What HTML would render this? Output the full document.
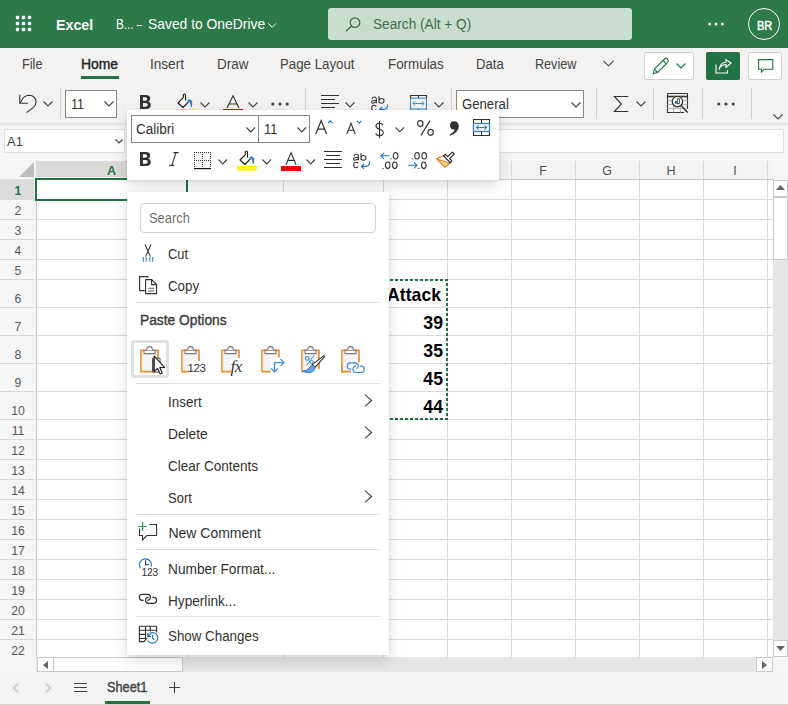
<!DOCTYPE html>
<html><head><meta charset="utf-8">
<style>
*{margin:0;padding:0;box-sizing:border-box}
html,body{width:788px;height:705px;overflow:hidden;background:#f5f5f5;font-family:"Liberation Sans",sans-serif;color:#323130}
.a{position:absolute}
.t{position:absolute;line-height:1;white-space:nowrap;transform-origin:0 0}
svg{position:absolute;overflow:visible}
.wh{color:#fff}
.tab{position:absolute;top:56.8px;font-size:14px;line-height:1;color:#424242;white-space:nowrap;transform-origin:0 0}
.sep{position:absolute;width:1px;background:#d2d0ce}
.box{position:absolute;background:#fff;border:1px solid #8a8886}
.hl{position:absolute;left:36px;width:737px;height:1px;background:#dadada}
.vl{position:absolute;top:161px;width:1px;height:496px;background:#dadada}
.rh{position:absolute;left:0;width:36px;text-align:center;font-size:13px;line-height:1;color:#585858;transform:scaleX(.94)}
.ch{position:absolute;top:165px;font-size:12.5px;line-height:1;color:#505050;text-align:center}
.shadow{box-shadow:0 6.4px 14.4px rgba(0,0,0,.13),0 1.2px 3.6px rgba(0,0,0,.11)}
.mi{position:absolute;left:168px;font-size:14px;line-height:1;color:#323130;white-space:nowrap;transform-origin:0 0}
.msep{position:absolute;left:135px;width:245px;height:1px;background:#e1dfdd}
.chev{fill:none;stroke:#424242;stroke-width:1.1}
</style></head><body>

<!-- ============ HEADER ============ -->
<div class="a" style="left:0;top:0;width:788px;height:48px;background:#2b7a48"></div>
<svg style="left:15px;top:15px" width="18" height="18" viewBox="0 0 18 18" fill="#fff"><rect x="0.8" y="0.8" width="3.4" height="3.4" rx="1"/><rect x="6.8" y="0.8" width="3.4" height="3.4" rx="1"/><rect x="12.8" y="0.8" width="3.4" height="3.4" rx="1"/><rect x="0.8" y="6.8" width="3.4" height="3.4" rx="1"/><rect x="6.8" y="6.8" width="3.4" height="3.4" rx="1"/><rect x="12.8" y="6.8" width="3.4" height="3.4" rx="1"/><rect x="0.8" y="12.8" width="3.4" height="3.4" rx="1"/><rect x="6.8" y="12.8" width="3.4" height="3.4" rx="1"/><rect x="12.8" y="12.8" width="3.4" height="3.4" rx="1"/></svg>
<div class="t wh" style="left:56px;top:17.1px;font-size:15px;font-weight:bold;transform:scaleX(.95)">Excel</div>
<div class="t wh" style="left:115.5px;top:17px;font-size:14.5px;transform:scaleX(.8)">B...</div>
<div class="a" style="left:136.5px;top:25px;width:5px;height:1px;background:#fff"></div>
<div class="t wh" style="left:147.5px;top:17px;font-size:14.5px;transform:scaleX(.956)">Saved to OneDrive</div>
<svg style="left:267.5px;top:22.8px" width="9" height="5" viewBox="0 0 9 5"><path d="M0.4 0.4L4.2 4.3L8 0.4" fill="none" stroke="#fff" stroke-width="1"/></svg>
<div class="a" style="left:328px;top:8px;width:304px;height:32px;background:#c8ddcf;border-radius:3px"></div>
<svg style="left:345px;top:17px" width="16" height="15" viewBox="0 0 16 15" fill="none" stroke="#3b6e4d" stroke-width="1.3">
  <circle cx="10" cy="5.6" r="4.8"/><path d="M6.6 9L1 14.3"/>
</svg>
<div class="t" style="left:373px;top:17.2px;font-size:14px;color:#3b6e4d;transform:scaleX(.975)">Search (Alt + Q)</div>
<svg style="left:708px;top:22px" width="16" height="4" viewBox="0 0 16 4" fill="#fff"><circle cx="1.6" cy="2" r="1.5"/><circle cx="8" cy="2" r="1.5"/><circle cx="14.4" cy="2" r="1.5"/></svg>
<div class="a" style="left:748px;top:8px;width:32px;height:32px;border:1px solid #fff;border-radius:50%"></div>
<div class="t wh" style="left:756.8px;top:20px;font-size:12.5px;-webkit-text-stroke:0.5px #fff;transform:scaleX(.88)">BR</div>

<!-- ============ TABS ============ -->
<div class="a" style="left:0;top:48px;width:788px;height:76px;background:#f3f2f1"></div>
<div class="tab" style="left:22px;transform:scaleX(.91)">File</div>
<div class="tab" style="left:81px;color:#242424;-webkit-text-stroke:0.4px #242424;transform:scaleX(.99)">Home</div>
<div class="a" style="left:81px;top:76px;width:38px;height:3px;background:#217346"></div>
<div class="tab" style="left:149.6px;transform:scaleX(.97)">Insert</div>
<div class="tab" style="left:216.5px;transform:scaleX(.96)">Draw</div>
<div class="tab" style="left:280px;transform:scaleX(.947)">Page Layout</div>
<div class="tab" style="left:388px;transform:scaleX(.955)">Formulas</div>
<div class="tab" style="left:475.5px;transform:scaleX(.937)">Data</div>
<div class="tab" style="left:535.3px;transform:scaleX(.9)">Review</div>
<svg style="left:603px;top:60px" width="11" height="7" viewBox="0 0 11 7"><path class="chev" d="M0.5 0.8L5.5 5.8L10.5 0.8"/></svg>

<!-- right buttons -->
<div class="a" style="left:644px;top:52px;width:50px;height:28px;background:#fff;border:1px solid #d1d1d1;border-radius:2px"></div>
<svg style="left:652px;top:57px" width="18" height="18" viewBox="0 0 18 18" fill="none" stroke="#217346" stroke-width="1.1">
  <path d="M1.2 16.8L2.3 12.2L12.5 2Q14 0.6 15.6 2.2Q17 3.8 15.8 5.3L5.6 15.5Z"/><path d="M11 3.5L14.3 6.8"/><path d="M2.3 12.2L5.6 15.5"/>
</svg>
<svg style="left:676px;top:63px" width="10" height="6" viewBox="0 0 10 6"><path d="M0.5 0.5L5 5L9.5 0.5" fill="none" stroke="#217346" stroke-width="1.1"/></svg>
<div class="a" style="left:706px;top:52px;width:34px;height:28px;background:#217346;border-radius:2px"></div>
<svg style="left:715px;top:59px" width="17" height="15" viewBox="0 0 17 15" fill="none" stroke="#fff" stroke-width="1.1">
  <path d="M1 5.5V14H12.5V11"/><path d="M4 11Q5 6 11 5.5V8.5L16 4L11 0.5V3.3Q5 3.8 4 11Z"/>
</svg>
<div class="a" style="left:748px;top:52px;width:34px;height:28px;background:#fff;border:1px solid #d1d1d1;border-radius:2px"></div>
<svg style="left:757.5px;top:59px" width="17" height="16" viewBox="0 0 17 16" fill="none" stroke="#217346" stroke-width="1.1">
  <path d="M0.6 0.6H14.8V10.2H6.2L3.4 13.2V10.2H0.6Z"/>
</svg>

<!-- ============ RIBBON ============ -->
<div class="a" style="left:0;top:123px;width:788px;height:1px;background:#e6e4e2"></div>
<div class="a" style="left:0;top:124px;width:788px;height:3px;background:linear-gradient(rgba(0,0,0,.06),rgba(0,0,0,0))"></div>
<!-- undo -->
<svg style="left:19px;top:94px" width="19" height="20" viewBox="0 0 19 20" fill="none" stroke="#323130" stroke-width="1.1"><path d="M0.8 0.7V9.2H9"/><path d="M1.3 8.7Q4.6 1.4 10 1.3Q16.6 1.6 17 7.8Q17.1 11 14.4 13.4L7.6 18.6"/></svg>
<svg style="left:43px;top:101px" width="10" height="6" viewBox="0 0 10 6"><path class="chev" d="M0.5 0.5L5 5L9.5 0.5"/></svg>
<div class="sep" style="left:60px;top:88px;height:31px"></div>
<div class="box" style="left:65px;top:90px;width:52px;height:28px"></div>
<div class="t" style="left:71px;top:97px;font-size:14px;color:#323130;transform:scaleX(.9)">11</div>
<svg style="left:104px;top:101px" width="10" height="6" viewBox="0 0 10 6"><path class="chev" d="M0.5 0.5L5 5L9.5 0.5"/></svg>
<svg style="left:140px;top:95px" width="11" height="14" viewBox="0 0 11 14"><path d="M0 0H5.6Q10.2 0 10.2 3.4Q10.2 5.9 7.8 6.6Q10.8 7.2 10.8 10Q10.8 14 5.8 14H0Z M2.9 2.3V5.8H5Q7.3 5.8 7.3 4Q7.3 2.3 5.2 2.3Z M2.9 8V11.7H5.4Q7.8 11.7 7.8 9.8Q7.8 8 5.3 8Z" fill="#323130" fill-rule="evenodd"/></svg>
<!-- ribbon fill color (partly hidden) -->
<svg style="left:172px;top:91px" width="28" height="24" viewBox="0 0 28 24" fill="none" stroke="#1b1b1b" stroke-width="1.1" stroke-linejoin="round">
  <path d="M6 12L11.2 6.6L16.6 10.4L11 16.4Z" fill="#f8f8f8" stroke="none"/>
  <path d="M13.5 9.6V4.1Q13.5 3 12.4 3Q11.3 3 11.3 4.1V6.6L6 12L11 16.5L16.6 10.6"/>
  <path d="M15.6 9.6Q17.2 8.4 18.6 9Q20.3 10 19.8 13.2L19.4 16Q18.6 13.5 18.2 11.6Q17.4 10.2 15.6 9.6Z" fill="#1a6fc4" stroke="#1a6fc4" stroke-width="0.6"/>
  <rect x="3" y="18" width="20" height="4.8" fill="#fff22a" stroke="none"/></svg>
<svg style="left:200px;top:102px" width="10" height="6" viewBox="0 0 10 6"><path class="chev" d="M0.5 0.5L5 5L9.5 0.5"/></svg>
<svg style="left:223px;top:95px" width="20" height="16" viewBox="0 0 20 16" fill="none" stroke="#323130" stroke-width="1.1">
  <path d="M4 13L10 0.8L16 13M6 9H14"/>
  <rect x="0" y="14" width="20" height="1.5" fill="#e00" stroke="none"/>
</svg>
<svg style="left:248px;top:102px" width="10" height="6" viewBox="0 0 10 6"><path class="chev" d="M0.5 0.5L5 5L9.5 0.5"/></svg>
<svg style="left:271px;top:101.5px" width="18" height="4" viewBox="0 0 18 4" fill="#424242"><circle cx="1.8" cy="2" r="1.6"/><circle cx="9" cy="2" r="1.6"/><circle cx="16.2" cy="2" r="1.6"/></svg>
<div class="sep" style="left:305px;top:88px;height:31px"></div>
<svg style="left:321px;top:95px" width="18" height="14" viewBox="0 0 18 14" stroke="#323130" stroke-width="1.05"><path d="M0 0.5H18M0 4.5H14M0 8.5H18M0 12.5H14"/></svg>
<svg style="left:345px;top:102px" width="10" height="6" viewBox="0 0 10 6"><path class="chev" d="M0.5 0.5L5 5L9.5 0.5"/></svg>
<svg style="left:371.3px;top:95.6px" width="18" height="16" viewBox="0 0 18 16" fill="none" stroke="#323130" stroke-width="1.05"><path d="M0.9 3.2Q1.6 1 3.3 1Q5.4 1 5.4 3.5V7.2M5.4 4.6Q2 4.4 0.8 5.4Q0.3 6.2 1 7Q2.6 7.7 5.4 5.8"/><path d="M8 0V7M8 4.6Q8.6 2.5 10.3 2.5Q13 2.5 13 4.8Q13 7.2 10.3 7.2Q8.6 7.2 8 5.3"/><path d="M5.2 10.5Q4.6 9.3 3.2 9.3Q0.7 9.3 0.7 12Q0.7 14.8 3.2 14.8Q4.6 14.8 5.2 13.6"/><path d="M16.4 8.5Q17 13.4 12.6 13.4H8.5M11 11L8.5 13.4L11 15.8" stroke="#1a73c8" stroke-width="1.1"/></svg>
<svg style="left:410px;top:95px" width="17" height="16" viewBox="0 0 17 16" fill="none" stroke="#323130" stroke-width="1.1"><path d="M0.5 3V0.5H16.5V3M8.5 0.5V3M0.5 14V15.5M16.5 14V15.5M8.5 14V15.5"/><rect x="0.55" y="3.2" width="15.9" height="10.8" stroke="#3b8ad8"/><path d="M3 8.5H14M5.2 6.3L3 8.5L5.2 10.7M11.8 6.3L14 8.5L11.8 10.7" stroke="#3b8ad8" stroke-width="1"/></svg>
<svg style="left:434px;top:102px" width="10" height="6" viewBox="0 0 10 6"><path class="chev" d="M0.5 0.5L5 5L9.5 0.5"/></svg>
<div class="sep" style="left:451px;top:88px;height:31px"></div>
<div class="box" style="left:456px;top:90px;width:128px;height:28px"></div>
<div class="t" style="left:461.5px;top:97px;font-size:14px;color:#323130;transform:scaleX(.94)">General</div>
<svg style="left:571px;top:101.5px" width="10" height="6" viewBox="0 0 10 6"><path class="chev" d="M0.5 0.5L5 5L9.5 0.5"/></svg>
<div class="sep" style="left:596px;top:88px;height:31px"></div>
<svg style="left:613px;top:95px" width="16" height="17" viewBox="0 0 16 17" fill="none" stroke="#323130" stroke-width="1.1"><path d="M15.2 1.5H1.4L8.4 9L1.4 16.5H15.2"/></svg>
<svg style="left:636px;top:101px" width="10" height="6" viewBox="0 0 10 6"><path class="chev" d="M0.5 0.5L5 5L9.5 0.5"/></svg>
<div class="sep" style="left:653px;top:88px;height:31px"></div>
<svg style="left:667px;top:92px" width="22" height="22" viewBox="0 0 22 22" fill="none" stroke="#323130" stroke-width="1.1"><path d="M0.5 1.5H20.5V17M17 20.5H0.5V1.5"/><path d="M0.5 4.5H20.5" stroke-width="1.6"/><path d="M0.5 8.5H20.5M0.5 12.5H20.5M0.5 16.5H20.5M6.5 4.5V20.5M13.5 4.5V20.5" stroke="#b0b0b0" stroke-width="0.9"/><circle cx="10.4" cy="9.6" r="5.2" fill="#fff" stroke-width="1.2"/><path d="M14.2 13.4L20.6 20.4" stroke-width="1.5"/><rect x="8" y="9" width="1.8" height="2.8" fill="#1a73c8" stroke="none"/><rect x="10.3" y="6.8" width="2" height="5" fill="#fff" stroke="#323130" stroke-width="0.8"/></svg>
<div class="sep" style="left:702px;top:88px;height:31px"></div>
<svg style="left:717px;top:101.5px" width="18" height="4" viewBox="0 0 18 4" fill="#424242"><circle cx="1.8" cy="2" r="1.6"/><circle cx="9" cy="2" r="1.6"/><circle cx="16.2" cy="2" r="1.6"/></svg>
<div class="sep" style="left:751px;top:88px;height:31px"></div>
<svg style="left:773px;top:113.5px" width="10" height="6" viewBox="0 0 10 6"><path class="chev" d="M0.5 0.5L5 5L9.5 0.5"/></svg>

<!-- ============ FORMULA BAR ============ -->
<div class="box" style="left:4px;top:129px;width:121px;height:24px;border-color:#e1dfdd"></div>
<div class="t" style="left:7px;top:135px;font-size:13px;color:#424242">A1</div>
<svg style="left:115px;top:139px" width="8" height="5" viewBox="0 0 8 5"><path class="chev" d="M0.5 0.5L4 4L7.5 0.5"/></svg>
<div class="box" style="left:130px;top:129px;width:654px;height:24px;border-color:#e1dfdd"></div>

<!-- ============ GRID ============ -->
<!--GRID-START-->
<div class="a" style="left:36px;top:161px;width:737px;height:18px;background:#f3f3f3"></div>
<div class="a" style="left:36px;top:161px;width:151px;height:16px;background:#dad9d8"></div>
<div class="a" style="left:0;top:179px;width:36px;height:478px;background:#f5f5f5"></div>
<div class="a" style="left:0;top:179px;width:34px;height:20px;background:#dcdcdc"></div>
<svg style="left:19px;top:162px" width="15" height="15" viewBox="0 0 15 15"><path d="M15 0V15H0Z" fill="#bdbdbd"/></svg>
<div class="a" style="left:36px;top:179px;width:737px;height:478px;background:#fff"></div>
<div class="a" style="left:187px;top:161px;width:1px;height:496px;background:#dadada"></div>
<div class="a" style="left:283px;top:161px;width:1px;height:496px;background:#dadada"></div>
<div class="a" style="left:383px;top:161px;width:1px;height:496px;background:#dadada"></div>
<div class="a" style="left:447px;top:161px;width:1px;height:496px;background:#dadada"></div>
<div class="a" style="left:511px;top:161px;width:1px;height:496px;background:#dadada"></div>
<div class="a" style="left:575px;top:161px;width:1px;height:496px;background:#dadada"></div>
<div class="a" style="left:639px;top:161px;width:1px;height:496px;background:#dadada"></div>
<div class="a" style="left:703px;top:161px;width:1px;height:496px;background:#dadada"></div>
<div class="a" style="left:767px;top:161px;width:1px;height:496px;background:#dadada"></div>
<div class="a" style="left:36px;top:179px;width:737px;height:1px;background:#c6c6c6"></div>
<div class="a" style="left:36px;top:179px;width:1px;height:478px;background:#c6c6c6"></div>
<div class="a" style="left:0;top:199px;width:773px;height:1px;background:#dadada"></div>
<div class="a" style="left:0;top:219px;width:773px;height:1px;background:#dadada"></div>
<div class="a" style="left:0;top:239px;width:773px;height:1px;background:#dadada"></div>
<div class="a" style="left:0;top:259px;width:773px;height:1px;background:#dadada"></div>
<div class="a" style="left:0;top:279px;width:773px;height:1px;background:#dadada"></div>
<div class="a" style="left:0;top:307px;width:773px;height:1px;background:#dadada"></div>
<div class="a" style="left:0;top:335px;width:773px;height:1px;background:#dadada"></div>
<div class="a" style="left:0;top:363px;width:773px;height:1px;background:#dadada"></div>
<div class="a" style="left:0;top:391px;width:773px;height:1px;background:#dadada"></div>
<div class="a" style="left:0;top:419px;width:773px;height:1px;background:#dadada"></div>
<div class="a" style="left:0;top:439px;width:773px;height:1px;background:#dadada"></div>
<div class="a" style="left:0;top:459px;width:773px;height:1px;background:#dadada"></div>
<div class="a" style="left:0;top:479px;width:773px;height:1px;background:#dadada"></div>
<div class="a" style="left:0;top:499px;width:773px;height:1px;background:#dadada"></div>
<div class="a" style="left:0;top:519px;width:773px;height:1px;background:#dadada"></div>
<div class="a" style="left:0;top:539px;width:773px;height:1px;background:#dadada"></div>
<div class="a" style="left:0;top:559px;width:773px;height:1px;background:#dadada"></div>
<div class="a" style="left:0;top:579px;width:773px;height:1px;background:#dadada"></div>
<div class="a" style="left:0;top:599px;width:773px;height:1px;background:#dadada"></div>
<div class="a" style="left:0;top:619px;width:773px;height:1px;background:#dadada"></div>
<div class="a" style="left:0;top:639px;width:773px;height:1px;background:#dadada"></div>
<div class="rh" style="top:183.8px;color:#217346;font-weight:bold">1</div>
<div class="rh" style="top:203.8px">2</div>
<div class="rh" style="top:223.8px">3</div>
<div class="rh" style="top:243.8px">4</div>
<div class="rh" style="top:263.8px">5</div>
<div class="rh" style="top:291.8px">6</div>
<div class="rh" style="top:319.8px">7</div>
<div class="rh" style="top:347.8px">8</div>
<div class="rh" style="top:375.8px">9</div>
<div class="rh" style="top:403.8px">10</div>
<div class="rh" style="top:423.8px">11</div>
<div class="rh" style="top:443.8px">12</div>
<div class="rh" style="top:463.8px">13</div>
<div class="rh" style="top:483.8px">14</div>
<div class="rh" style="top:503.8px">15</div>
<div class="rh" style="top:523.8px">16</div>
<div class="rh" style="top:543.8px">17</div>
<div class="rh" style="top:563.8px">18</div>
<div class="rh" style="top:583.8px">19</div>
<div class="rh" style="top:603.8px">20</div>
<div class="rh" style="top:623.8px">21</div>
<div class="rh" style="top:643.8px">22</div>
<div class="ch" style="left:36px;width:151px;color:#217346;font-weight:bold;">A</div>
<div class="ch" style="left:187px;width:96px;">B</div>
<div class="ch" style="left:283px;width:100px;">C</div>
<div class="ch" style="left:383px;width:64px;">D</div>
<div class="ch" style="left:447px;width:64px;">E</div>
<div class="ch" style="left:511px;width:64px;">F</div>
<div class="ch" style="left:575px;width:64px;">G</div>
<div class="ch" style="left:639px;width:64px;">H</div>
<div class="ch" style="left:703px;width:64px;">I</div>
<div class="a" style="left:35px;top:178px;width:153px;height:23px;border:2px solid #217346"></div>
<div class="t" style="left:383px;width:58px;text-align:right;top:284.6px;font-size:19px;font-weight:bold;color:#000;transform-origin:100% 0;transform:scaleX(.93)">Attack</div>
<div class="t" style="left:383px;width:60px;text-align:right;top:312.5px;font-size:19px;font-weight:bold;color:#000;transform-origin:100% 0;transform:scaleX(.93)">39</div>
<div class="t" style="left:383px;width:60px;text-align:right;top:340.9px;font-size:19px;font-weight:bold;color:#000;transform-origin:100% 0;transform:scaleX(.93)">35</div>
<div class="t" style="left:383px;width:60px;text-align:right;top:368.9px;font-size:19px;font-weight:bold;color:#000;transform-origin:100% 0;transform:scaleX(.93)">45</div>
<div class="t" style="left:383px;width:60px;text-align:right;top:396.6px;font-size:19px;font-weight:bold;color:#000;transform-origin:100% 0;transform:scaleX(.93)">44</div>
<svg style="left:299px;top:279px" width="149" height="141" viewBox="0 0 149 141"><rect x="1" y="1" width="147" height="139" fill="none" stroke="#217346" stroke-width="2" stroke-dasharray="3 2"/></svg>
<div class="a" style="left:773px;top:180px;width:15px;height:477px;background:#e6e6e6"></div>
<div class="a" style="left:773px;top:180px;width:15px;height:17px;background:#fff;border:1px solid #c8c8c8"></div>
<svg style="left:776px;top:185px" width="9" height="5" viewBox="0 0 9 5"><path d="M4.5 0L9 5H0Z" fill="#666"/></svg>
<div class="a" style="left:773px;top:197px;width:15px;height:63px;background:#fff;border:1px solid #c8c8c8"></div>
<div class="a" style="left:773px;top:640px;width:15px;height:17px;background:#fff;border:1px solid #c8c8c8"></div>
<svg style="left:776px;top:646px" width="9" height="5" viewBox="0 0 9 5"><path d="M0 0H9L4.5 5Z" fill="#666"/></svg>
<div class="a" style="left:36px;top:657px;width:737px;height:15px;background:#e6e6e6"></div>
<div class="a" style="left:37px;top:657px;width:17px;height:15px;background:#fff;border:1px solid #c8c8c8"></div>
<svg style="left:43px;top:661px" width="5" height="8" viewBox="0 0 5 8"><path d="M5 0V8L0 4Z" fill="#666"/></svg>
<div class="a" style="left:53px;top:657px;width:130px;height:15px;background:#fff;border:1px solid #c8c8c8"></div>
<div class="a" style="left:756px;top:657px;width:17px;height:15px;background:#fff;border:1px solid #c8c8c8"></div>
<svg style="left:762px;top:661px" width="5" height="8" viewBox="0 0 5 8"><path d="M0 0V8L5 4Z" fill="#666"/></svg>
<div class="a" style="left:0;top:672px;width:788px;height:33px;background:#f4f4f4"></div>
<div class="a" style="left:0;top:704px;width:788px;height:1px;background:#d6d6d6"></div>
<svg style="left:12px;top:683px" width="7" height="10" viewBox="0 0 7 10"><path d="M6.5 0.5L1.5 5L6.5 9.5" fill="none" stroke="#c0c0c0" stroke-width="1.1"/></svg>
<svg style="left:45px;top:683px" width="7" height="10" viewBox="0 0 7 10"><path d="M0.5 0.5L5.5 5L0.5 9.5" fill="none" stroke="#c0c0c0" stroke-width="1.1"/></svg>
<svg style="left:73.5px;top:683px" width="13" height="9" viewBox="0 0 13 9" stroke="#424242" stroke-width="1.1"><path d="M0 0.5H13M0 4.5H13M0 8.5H13"/></svg>
<div class="t" style="left:107px;top:680.1px;font-size:14.5px;color:#424242;-webkit-text-stroke:0.4px #424242;transform:scaleX(.88)">Sheet1</div>
<div class="a" style="left:105px;top:701px;width:45px;height:3px;background:#217346"></div>
<svg style="left:169px;top:682px" width="11" height="11" viewBox="0 0 11 11" stroke="#424242" stroke-width="1.1"><path d="M5.5 0V11M0 5.5H11"/></svg>
<!--GRID-END-->

<!-- ============ MINI TOOLBAR ============ -->
<!--MINI-START-->
<div class="a shadow" style="left:127px;top:110px;width:372px;height:70px;background:#fff"></div>
<div class="a" style="left:131px;top:115px;width:128px;height:28px;border:1px solid #8a8886;background:#fff"></div>
<div class="a" style="left:258px;top:115px;width:52px;height:28px;border:1px solid #8a8886;background:#fff"></div>
<div class="t" style="left:136.3px;top:122.25px;font-size:14px;color:#323130;;transform:scaleX(0.965)">Calibri</div>
<svg style="left:245.5px;top:126.5px" width="9.5" height="5.5" viewBox="0 0 9.5 5.5"><path d="M0.5 0.5L4.75 5.0L9.0 0.5" fill="none" stroke="#424242" stroke-width="1.1"/></svg>
<div class="t" style="left:263.8px;top:122.25px;font-size:14px;color:#323130;;transform:scaleX(0.92)">11</div>
<svg style="left:296.8px;top:126.5px" width="9.5" height="5.5" viewBox="0 0 9.5 5.5"><path d="M0.5 0.5L4.75 5.0L9.0 0.5" fill="none" stroke="#424242" stroke-width="1.1"/></svg>
<svg style="left:315px;top:120px" width="19" height="15" viewBox="0 0 19 15" fill="none" stroke="#323130" stroke-width="1.2"><path d="M0.8 14L6.2 0.6L11.6 14M2.9 9.2H9.5"/><path d="M13 3L15.2 0.8L17.4 3" stroke="#1a73c8" stroke-width="1.1"/></svg>
<svg style="left:345.5px;top:120px" width="16" height="15" viewBox="0 0 16 15" fill="none" stroke="#323130" stroke-width="1.1"><path d="M0.8 14L5 3.2L9.2 14M2.5 10.2H7.6"/><path d="M11 0.8L13.2 3L15.4 0.8" stroke="#1a73c8" stroke-width="1.1"/></svg>
<svg style="left:375px;top:121px" width="9" height="17" viewBox="0 0 9 17" fill="none" stroke="#323130" stroke-width="1.1"><path d="M8 4.2Q7.3 2.3 4.5 2.3Q1 2.3 1 5Q1 7.2 4.5 8.3Q8.2 9.4 8.2 11.8Q8.2 14.6 4.5 14.6Q1.4 14.6 0.8 12.4"/><path d="M4.5 0V17"/></svg>
<svg style="left:395px;top:127px" width="9.5" height="5.3" viewBox="0 0 9.5 5.3"><path d="M0.5 0.5L4.75 4.8L9.0 0.5" fill="none" stroke="#424242" stroke-width="1.1"/></svg>
<svg style="left:417px;top:120px" width="17" height="16" viewBox="0 0 17 16" fill="none" stroke="#323130" stroke-width="1.15"><ellipse cx="3.3" cy="3.6" rx="2.7" ry="3"/><ellipse cx="13.6" cy="12.3" rx="2.7" ry="3"/><path d="M13 0.6L4 15.4"/></svg>
<svg style="left:448.5px;top:121px" width="10" height="15" viewBox="0 0 10 15"><path d="M4.6 0.2Q9.8 0.3 9.8 5.2Q9.8 11 1.2 14.8L0.6 13.8Q5.2 11 5.8 8.6Q1.2 8.6 1 4.4Q1.2 0.3 4.6 0.2Z" fill="#323130"/></svg>
<svg style="left:473px;top:119px" width="18" height="17" viewBox="0 0 18 17" fill="none" stroke="#323130" stroke-width="1.1"><path d="M0.5 0.5H16.5V16.5H0.5Z"/><path d="M8.5 0.5V4.5M8.5 12.5V16.5"/><rect x="0.5" y="4.5" width="16" height="8" fill="#f4f4f4" stroke="#2f80d0" stroke-width="1.2"/><path d="M3.5 8.5H13.5M5.6 6.4L3.5 8.5L5.6 10.6M11.4 6.4L13.5 8.5L11.4 10.6" stroke="#2f80d0" stroke-width="1.05"/></svg>
<svg style="left:140px;top:152px" width="11" height="14" viewBox="0 0 11 14"><path d="M0 0H5.6Q10.2 0 10.2 3.4Q10.2 5.9 7.8 6.6Q10.8 7.2 10.8 10Q10.8 14 5.8 14H0Z M2.9 2.3V5.8H5Q7.3 5.8 7.3 4Q7.3 2.3 5.2 2.3Z M2.9 8V11.7H5.4Q7.8 11.7 7.8 9.8Q7.8 8 5.3 8Z" fill="#323130" fill-rule="evenodd"/></svg>
<svg style="left:168.5px;top:152px" width="10" height="14" viewBox="0 0 10 14" fill="none" stroke="#323130" stroke-width="1.1"><path d="M4.5 0.6H9.6M0.2 13.4H5.3M7 0.6L2.8 13.4"/></svg>
<svg style="left:194px;top:152px" width="17" height="17" viewBox="0 0 17 17"><rect x="0" y="0" width="17" height="15" fill="#f8f8f8"/><g fill="#323130"><rect x="0" y="0" width="1" height="1"/><rect x="0" y="2" width="1" height="1"/><rect x="0" y="4" width="1" height="1"/><rect x="0" y="6" width="1" height="1"/><rect x="0" y="8" width="1" height="1"/><rect x="0" y="10" width="1" height="1"/><rect x="0" y="12" width="1" height="1"/><rect x="0" y="14" width="1" height="1"/><rect x="2" y="0" width="1" height="1"/><rect x="2" y="8" width="1" height="1"/><rect x="4" y="0" width="1" height="1"/><rect x="4" y="8" width="1" height="1"/><rect x="6" y="0" width="1" height="1"/><rect x="6" y="8" width="1" height="1"/><rect x="8" y="0" width="1" height="1"/><rect x="8" y="2" width="1" height="1"/><rect x="8" y="4" width="1" height="1"/><rect x="8" y="6" width="1" height="1"/><rect x="8" y="8" width="1" height="1"/><rect x="8" y="10" width="1" height="1"/><rect x="8" y="12" width="1" height="1"/><rect x="8" y="14" width="1" height="1"/><rect x="10" y="0" width="1" height="1"/><rect x="10" y="8" width="1" height="1"/><rect x="12" y="0" width="1" height="1"/><rect x="12" y="8" width="1" height="1"/><rect x="14" y="0" width="1" height="1"/><rect x="14" y="8" width="1" height="1"/><rect x="16" y="0" width="1" height="1"/><rect x="16" y="2" width="1" height="1"/><rect x="16" y="4" width="1" height="1"/><rect x="16" y="6" width="1" height="1"/><rect x="16" y="8" width="1" height="1"/><rect x="16" y="10" width="1" height="1"/><rect x="16" y="12" width="1" height="1"/><rect x="16" y="14" width="1" height="1"/></g><rect x="0" y="16" width="17" height="1.2" fill="#111"/></svg>
<svg style="left:218px;top:159px" width="9.5" height="5.5" viewBox="0 0 9.5 5.5"><path d="M0.5 0.5L4.75 5.0L9.0 0.5" fill="none" stroke="#424242" stroke-width="1.1"/></svg>
<svg style="left:234px;top:148px" width="28" height="24" viewBox="0 0 28 24" fill="none" stroke="#1b1b1b" stroke-width="1.1" stroke-linejoin="round"><path d="M6 12L11.2 6.6L16.6 10.4L11 16.4Z" fill="#f8f8f8" stroke="none"/><path d="M13.5 9.6V4.1Q13.5 3 12.4 3Q11.3 3 11.3 4.1V6.6L6 12L11 16.5L16.6 10.6"/><path d="M15.6 9.6Q17.2 8.4 18.6 9Q20.3 10 19.8 13.2L19.4 16Q18.6 13.5 18.2 11.6Q17.4 10.2 15.6 9.6Z" fill="#1a6fc4" stroke="#1a6fc4" stroke-width="0.6"/><rect x="3" y="18" width="20" height="4.8" fill="#fff22a" stroke="none"/></svg>
<svg style="left:262px;top:159px" width="9.5" height="5.5" viewBox="0 0 9.5 5.5"><path d="M0.5 0.5L4.75 5.0L9.0 0.5" fill="none" stroke="#424242" stroke-width="1.1"/></svg>
<svg style="left:281px;top:152px" width="20" height="19" viewBox="0 0 20 19" fill="none" stroke="#323130" stroke-width="1.1"><path d="M5 12.8L10 0.6L15 12.8M7 8.4H13"/><rect x="0" y="14" width="20" height="5" fill="#ee0000" stroke="none"/></svg>
<svg style="left:306px;top:159px" width="9.5" height="5.5" viewBox="0 0 9.5 5.5"><path d="M0.5 0.5L4.75 5.0L9.0 0.5" fill="none" stroke="#424242" stroke-width="1.1"/></svg>
<svg style="left:324px;top:150px" width="18" height="18" viewBox="0 0 18 18" stroke="#323130" stroke-width="1.05"><path d="M0 1.5H18M2 5.5H16M0 9.5H18M2 13.5H16M0 17.5H18"/></svg>
<svg style="left:353px;top:153px" width="18" height="16" viewBox="0 0 18 16" fill="none" stroke="#323130" stroke-width="1.05"><path d="M0.9 3.2Q1.6 1 3.3 1Q5.4 1 5.4 3.5V7.2M5.4 4.6Q2 4.4 0.8 5.4Q0.3 6.2 1 7Q2.6 7.7 5.4 5.8"/><path d="M8 0V7M8 4.6Q8.6 2.5 10.3 2.5Q13 2.5 13 4.8Q13 7.2 10.3 7.2Q8.6 7.2 8 5.3"/><path d="M5.2 10.5Q4.6 9.3 3.2 9.3Q0.7 9.3 0.7 12Q0.7 14.8 3.2 14.8Q4.6 14.8 5.2 13.6"/><path d="M16.4 8.5Q17 13.4 12.6 13.4H8.5M11 11L8.5 13.4L11 15.8" stroke="#1a73c8" stroke-width="1.1"/></svg>
<svg style="left:380px;top:151.5px" width="20" height="18" viewBox="0 0 20 18" fill="none" stroke="#323130" stroke-width="1.05"><path d="M1 3.8H9.5M4 0.8L1 3.8L4 6.8" stroke="#1a73c8"/><rect x="10.3" y="6.3" width="1.1" height="1.1" fill="#323130" stroke="none"/><ellipse cx="15.6" cy="3.7" rx="2.3" ry="3.3"/><rect x="2.5" y="16" width="1.1" height="1.1" fill="#323130" stroke="none"/><ellipse cx="7.7" cy="13.3" rx="2.3" ry="3.3"/><ellipse cx="14.8" cy="13.3" rx="2.3" ry="3.3"/></svg>
<svg style="left:407.5px;top:151.5px" width="20" height="18" viewBox="0 0 20 18" fill="none" stroke="#323130" stroke-width="1.05"><rect x="3.7" y="6.3" width="1.1" height="1.1" fill="#323130" stroke="none"/><ellipse cx="9" cy="3.7" rx="2.3" ry="3.3"/><ellipse cx="16.2" cy="3.7" rx="2.3" ry="3.3"/><path d="M0.3 13.3H9M6 10.3L9 13.3L6 16.3" stroke="#1a73c8"/><rect x="10.3" y="16" width="1.1" height="1.1" fill="#323130" stroke="none"/><ellipse cx="15.8" cy="13.3" rx="2.3" ry="3.3"/></svg>
<svg style="left:432px;top:148px" width="26" height="24" viewBox="0 0 26 24" stroke-linejoin="round"><path d="M11.6 7.8L4.6 10.6L13 19.4L18.4 14.8Z" fill="#fff"/><path d="M7.6 13.2L13 19.2L17.8 15.4Z" fill="#fbd98a"/><path d="M11.6 7.8L4.6 10.6L13 19.4L18.4 14.8M5.4 11.3L17.8 15.2" fill="none" stroke="#e2730f" stroke-width="1.1"/><path d="M11.6 7.8L13.2 6.4L15.6 8.6L20.4 4.2L22.2 6.2L17.6 10.6L19.8 13L18.4 14.8Z" fill="#fff" stroke="#1b1b1b" stroke-width="1.1"/></svg>
<!--MINI-END-->

<!-- ============ CONTEXT MENU ============ -->
<!--CTX-START-->
<div class="a shadow" style="left:127px;top:192px;width:262px;height:463px;background:#fff"></div>
<div class="a" style="left:140px;top:203px;width:236px;height:30px;border:1px solid #d1d1d1;border-radius:4px;background:#fff"></div>
<div class="t" style="left:149.3px;top:211.15px;font-size:14px;color:#707070;;transform:scaleX(0.9200)">Search</div>
<svg style="left:141px;top:244px" width="14" height="19" viewBox="0 0 14 19" fill="none"><path d="M4 0.5L9.4 12.6M10 0.5L4.6 12.6" stroke="#323130" stroke-width="1.05"/><path d="M2.6 13.4Q1.2 15.6 2.6 17.8M4.8 13.4Q6.2 15.6 4.8 17.8M9.2 13.4Q7.8 15.6 9.2 17.8M11.4 13.4Q12.8 15.6 11.4 17.8" stroke="#1a73c8" stroke-width="1.1"/></svg>
<div class="t" style="left:168.4px;top:247.15px;font-size:14px;color:#323130;;transform:scaleX(0.9200)">Cut</div>
<svg style="left:139px;top:276px" width="20" height="20" viewBox="0 0 20 20" fill="none" stroke="#323130" stroke-width="1.1"><path d="M9.4 1.4Q9 0.6 8.2 0.6H0.6V14.6H5.8"/><path d="M6.6 3.6H12.6L17.6 8.6V17.6H6.6Z" fill="#fff"/><path d="M12.6 3.6V8.6H17.6"/><path d="M9.2 12.2H15M9.2 15H15" stroke="#555"/></svg>
<div class="t" style="left:168.4px;top:279.15px;font-size:14px;color:#323130;;transform:scaleX(0.9500)">Copy</div>
<div class="a" style="left:136px;top:302px;width:244px;height:1px;background:#e1dfdd"></div>
<div class="t" style="left:140.4px;top:313.35px;font-size:14px;color:#3b3a39;-webkit-text-stroke:0.35px #3b3a39;;transform:scaleX(0.9850)">Paste Options</div>
<div class="a" style="left:131px;top:340px;width:38px;height:38px;border:3.5px solid #e0e0e0;border-radius:3px;background:#fff"></div>
<svg style="left:140px;top:346px" width="26" height="28" viewBox="0 0 26 28"><path d="M1 4.3H18V25.6H1Z" fill="#f4f4f4" stroke="#e8912d" stroke-width="1.7"/><path d="M1.9 5.2V24.7" stroke="#fbd89a" stroke-width="0.7"/><path d="M4 4.2H15V7.6H4Z" fill="#fff" stroke="#7a7a7a" stroke-width="1.1"/><path d="M6.6 4.2Q6.6 0.6 9.5 0.6Q12.4 0.6 12.4 4.2" fill="#fff" stroke="#7a7a7a" stroke-width="1.1"/><path d="M12.5 12.2H20V26H12.5Z" fill="#fff" stroke="#555" stroke-width="1"/><path d="M13.8 12.8V25.5" stroke="#555" stroke-width="1.6"/><path d="M14.2 10.2V25.8L17.6 22.4L20.2 28L22.2 27L19.8 21.6L24.6 21.4Z" fill="#fff" stroke="#222" stroke-width="1.1" stroke-linejoin="round"/></svg>
<svg style="left:180.5px;top:346px" width="26" height="28" viewBox="0 0 26 28"><path d="M1 4.3H18V25.6H1Z" fill="#f4f4f4" stroke="#e8912d" stroke-width="1.7"/><path d="M1.9 5.2V24.7" stroke="#fbd89a" stroke-width="0.7"/><path d="M4 4.2H15V7.6H4Z" fill="#fff" stroke="#7a7a7a" stroke-width="1.1"/><path d="M6.6 4.2Q6.6 0.6 9.5 0.6Q12.4 0.6 12.4 4.2" fill="#fff" stroke="#7a7a7a" stroke-width="1.1"/><rect x="8" y="15" width="18" height="12" fill="#fff"/><text x="6.4" y="26.3" font-family="Liberation Sans" font-size="11.5" fill="#323130" letter-spacing="-0.4">123</text></svg>
<svg style="left:220.5px;top:346px" width="26" height="28" viewBox="0 0 26 28"><path d="M1 4.3H18V25.6H1Z" fill="#f4f4f4" stroke="#e8912d" stroke-width="1.7"/><path d="M1.9 5.2V24.7" stroke="#fbd89a" stroke-width="0.7"/><path d="M4 4.2H15V7.6H4Z" fill="#fff" stroke="#7a7a7a" stroke-width="1.1"/><path d="M6.6 4.2Q6.6 0.6 9.5 0.6Q12.4 0.6 12.4 4.2" fill="#fff" stroke="#7a7a7a" stroke-width="1.1"/><rect x="10" y="12" width="14" height="16" fill="#fff"/><text x="9.5" y="25.5" font-family="Liberation Serif" font-style="italic" font-size="17" fill="#323130" letter-spacing="-0.5">fx</text></svg>
<svg style="left:260.5px;top:346px" width="26" height="28" viewBox="0 0 26 28"><path d="M1 4.3H18V25.6H1Z" fill="#f4f4f4" stroke="#e8912d" stroke-width="1.7"/><path d="M1.9 5.2V24.7" stroke="#fbd89a" stroke-width="0.7"/><path d="M4 4.2H15V7.6H4Z" fill="#fff" stroke="#7a7a7a" stroke-width="1.1"/><path d="M6.6 4.2Q6.6 0.6 9.5 0.6Q12.4 0.6 12.4 4.2" fill="#fff" stroke="#7a7a7a" stroke-width="1.1"/><rect x="9.5" y="11.5" width="17" height="17" fill="#fff"/><path d="M13.5 24.8V16.5H23M19.5 13.1L23 16.6L19.5 20.1M10 22.4L13.5 25.9L17 22.4" fill="none" stroke="#3b8ad8" stroke-width="1.25"/></svg>
<svg style="left:300.5px;top:346px" width="26" height="28" viewBox="0 0 26 28"><path d="M1 4.3H18V25.6H1Z" fill="#f4f4f4" stroke="#e8912d" stroke-width="1.7"/><path d="M1.9 5.2V24.7" stroke="#fbd89a" stroke-width="0.7"/><path d="M4 4.2H15V7.6H4Z" fill="#fff" stroke="#7a7a7a" stroke-width="1.1"/><path d="M6.6 4.2Q6.6 0.6 9.5 0.6Q12.4 0.6 12.4 4.2" fill="#fff" stroke="#7a7a7a" stroke-width="1.1"/><rect x="2" y="23" width="24" height="5" fill="#fff"/><circle cx="6.2" cy="12.4" r="1.9" fill="none" stroke="#3b8ad8" stroke-width="1.1"/><circle cx="10.6" cy="16" r="1.6" fill="none" stroke="#3b8ad8" stroke-width="1"/><path d="M13 9.3L5.5 19.5" stroke="#3b8ad8" stroke-width="1"/><path d="M11.2 18.6L22.6 9.8Q23.8 9.4 23.4 10.8L14.2 21.2Z" fill="#fff" stroke="#323130" stroke-width="1.05" stroke-linejoin="round"/><path d="M1.6 24.8Q6 25.2 8.2 22Q10.4 18.8 12.4 19.4Q14.6 20.4 14 22.6Q12.6 27 5.8 26.6Q3 26.4 1.6 24.8Z" fill="#6aa5dd" stroke="#1f6fc0" stroke-width="0.9"/></svg>
<svg style="left:340.5px;top:346px" width="26" height="28" viewBox="0 0 26 28"><path d="M1 4.3H18V25.6H1Z" fill="#f4f4f4" stroke="#e8912d" stroke-width="1.7"/><path d="M1.9 5.2V24.7" stroke="#fbd89a" stroke-width="0.7"/><path d="M4 4.2H15V7.6H4Z" fill="#fff" stroke="#7a7a7a" stroke-width="1.1"/><path d="M6.6 4.2Q6.6 0.6 9.5 0.6Q12.4 0.6 12.4 4.2" fill="#fff" stroke="#7a7a7a" stroke-width="1.1"/><rect x="5" y="16.5" width="21" height="12" fill="#fff"/><rect x="1" y="16.5" width="9" height="9" fill="#f4f4f4"/><path d="M1 16.5V25.6H10" fill="none" stroke="#e8912d" stroke-width="1.7"/><path d="M10 23.2H9.3Q6.3 23.2 6.3 20Q6.3 16.8 9.3 16.8H14.3Q17.3 16.8 17.3 20Q17.3 22 15.5 23" fill="none" stroke="#3b8ad8" stroke-width="1.2"/><path d="M15.1 20.2Q12 20.2 12 23.35Q12 26.5 15.1 26.5H20.1Q23.2 26.5 23.2 23.35Q23.2 20.2 20.1 20.2H19" fill="none" stroke="#3b8ad8" stroke-width="1.2"/></svg>
<div class="a" style="left:136px;top:383px;width:244px;height:1px;background:#e1dfdd"></div>
<div class="t" style="left:168.4px;top:395.15px;font-size:14px;color:#323130;;transform:scaleX(0.9600)">Insert</div>
<svg style="left:364px;top:394.2px" width="9" height="13" viewBox="0 0 9 13"><path d="M1 0.6L7.6 6.5L1 12.4" fill="none" stroke="#424242" stroke-width="1.1"/></svg>
<div class="t" style="left:168.4px;top:427.35px;font-size:14px;color:#323130;;transform:scaleX(0.9800)">Delete</div>
<svg style="left:364px;top:426.4px" width="9" height="13" viewBox="0 0 9 13"><path d="M1 0.6L7.6 6.5L1 12.4" fill="none" stroke="#424242" stroke-width="1.1"/></svg>
<div class="t" style="left:168.4px;top:459.35px;font-size:14px;color:#323130;;transform:scaleX(0.9650)">Clear Contents</div>
<div class="t" style="left:168.4px;top:491.15px;font-size:14px;color:#323130;;transform:scaleX(0.9300)">Sort</div>
<svg style="left:364px;top:490.2px" width="9" height="13" viewBox="0 0 9 13"><path d="M1 0.6L7.6 6.5L1 12.4" fill="none" stroke="#424242" stroke-width="1.1"/></svg>
<div class="a" style="left:136px;top:514px;width:244px;height:1px;background:#e1dfdd"></div>
<svg style="left:134px;top:518px" width="26" height="26" viewBox="0 0 26 26" fill="none" stroke="#323130" stroke-width="1.1"><path d="M15.2 6.5H22.6V17.5H12.8L8.5 22V17.5H5.4V10.8"/><path d="M8.6 4V12.8M4.2 8.5H13" stroke="#2e9e4a" stroke-width="1.2"/></svg>
<div class="t" style="left:168.4px;top:525.75px;font-size:14px;color:#323130;;transform:scaleX(1.0000)">New Comment</div>
<div class="a" style="left:136px;top:549px;width:244px;height:1px;background:#e1dfdd"></div>
<svg style="left:136px;top:554px" width="26" height="24" viewBox="0 0 26 24" fill="none"><path d="M4.4 14.3A6 6 0 1 1 15.1 12.6" stroke="#1a73c8" stroke-width="1.1"/><path d="M9.6 6.3V10.7H12.8" stroke="#323130" stroke-width="1.1"/><text x="5.6" y="21.6" font-family="Liberation Sans" font-size="10.2" fill="#323130" letter-spacing="-0.2">123</text></svg>
<div class="t" style="left:168.4px;top:561.75px;font-size:14px;color:#323130;;transform:scaleX(0.9780)">Number Format...</div>
<svg style="left:136px;top:588px" width="24" height="20" viewBox="0 0 24 20" fill="none" stroke="#323130" stroke-width="1.15"><path d="M7.6 12.4H6.3Q3.3 12.4 3.3 9.35Q3.3 6.3 6.3 6.3H11.5Q14.5 6.3 14.5 9.3Q14.5 12.3 11.4 12.3"/><path d="M12.6 9.3Q9.5 9.3 9.5 12.35Q9.5 15.4 12.5 15.4H17.6Q20.6 15.4 20.6 12.35Q20.6 9.3 17.6 9.3H16.3"/></svg>
<div class="t" style="left:168.4px;top:593.75px;font-size:14px;color:#323130;;transform:scaleX(0.9740)">Hyperlink...</div>
<div class="a" style="left:136px;top:616px;width:244px;height:1px;background:#e1dfdd"></div>
<svg style="left:136px;top:622px" width="24" height="24" viewBox="0 0 24 24" fill="none" stroke="#323130" stroke-width="1.1"><path d="M3.4 16.5V4.3H20.6V10.4M3.4 16.5V19.6H8L10.6 16.5H3.4"/><path d="M3.4 8.3H20.6M3.4 12.4H9.5M9.5 4.3V16.5M14.3 4.3V9.4"/><path d="M11.9 18.5A5.3 5.3 0 1 0 13.8 11.3" stroke="#1a73c8" stroke-width="1.15" fill="#fff"/><path d="M11.8 11.1V14.3H15M12 14.1L14.4 11.8" stroke="#1a73c8" stroke-width="1.3"/><path d="M16.6 13V16.2L18.2 17.8" stroke="#1a73c8" stroke-width="1.1"/></svg>
<div class="t" style="left:168.4px;top:629.05px;font-size:14px;color:#323130;;transform:scaleX(0.9540)">Show Changes</div>
<!--CTX-END-->

</body></html>
